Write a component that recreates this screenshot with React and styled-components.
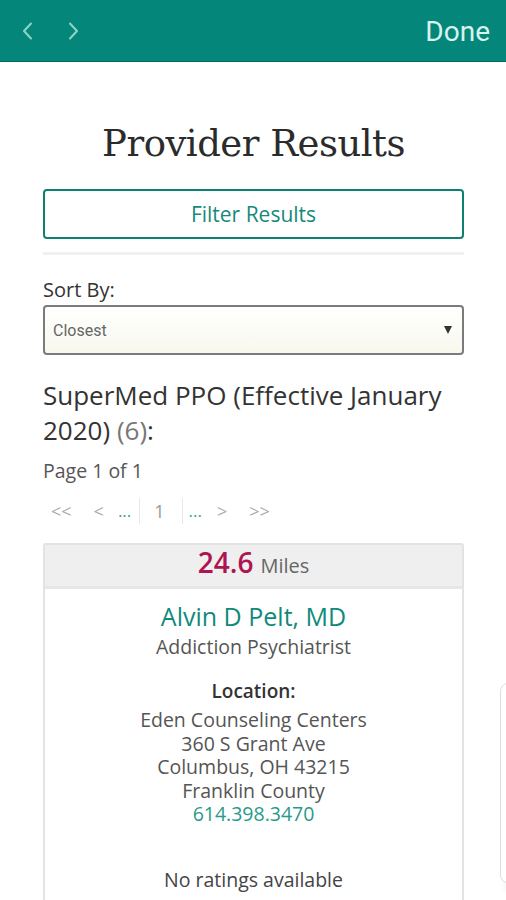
import styled, { createGlobalStyle } from "styled-components";

const GlobalStyle = createGlobalStyle`
  body {
    margin: 0;
    background: #ffffff;
    font-family: "Open Sans", "Liberation Sans", sans-serif;
    color: #333333;
  }
`;

const Screen = styled.div`
  position: relative;
  width: 506px;
  height: 900px;
  overflow: hidden;
  background: #ffffff;
`;

const TopBar = styled.header`
  height: 61px;
  background: #04877a;
  border-bottom: 1px solid #026a60;
  display: flex;
  align-items: center;
  padding: 0 16px 0 22px;
`;

const NavArrows = styled.div`
  display: flex;
  align-items: center;
  gap: 33px;
  flex: 1;
`;

const Done = styled.span`
  font-family: Roboto, "Liberation Sans", sans-serif;
  font-size: 28px;
  color: #d8f2ed;
  padding-top: 2px;
`;

const Content = styled.main`
  padding: 0 42px 0 43px;
`;

const Title = styled.h1`
  margin: 60px 0 0;
  font-family: "DejaVu Serif", "Liberation Serif", serif;
  font-weight: normal;
  font-size: 37px;
  line-height: 44px;
  letter-spacing: -0.5px;
  text-align: center;
  color: #2b2b2b;
`;

const FilterButton = styled.button`
  display: block;
  width: 100%;
  height: 50px;
  margin-top: 23px;
  border: 2px solid #0f7f72;
  border-radius: 4px;
  background: #ffffff;
  color: #17897b;
  font-family: "Open Sans", sans-serif;
  font-size: 21px;
`;

const Divider = styled.hr`
  margin: 13px 0 0;
  border: none;
  height: 3px;
  background: #f1f1f1;
`;

const Label = styled.div`
  margin-top: 23px;
  font-size: 20px;
  line-height: 24px;
  color: #333;
`;

const Select = styled.div`
  box-sizing: border-box;
  height: 50px;
  margin-top: 3px;
  border: 2px solid #7b7b7b;
  border-radius: 4px;
  background: linear-gradient(#ffffff, #f8f8ee);
  display: flex;
  align-items: center;
  justify-content: space-between;
  padding: 0 8px 0 8px;
  font-family: Roboto, "Liberation Sans", sans-serif;
  font-size: 16px;
  color: #666;
`;

const Caret = styled.span`
  width: 0;
  height: 0;
  border-left: 4px solid transparent;
  border-right: 4px solid transparent;
  border-top: 8px solid #333;
  margin-right: 2px;
`;

const PlanHeading = styled.h2`
  margin: 23px 0 0;
  font-weight: normal;
  font-size: 26px;
  line-height: 35px;
  color: #333;
`;

const Count = styled.span`
  color: #777;
`;

const PageInfo = styled.div`
  margin-top: 10px;
  font-size: 19.5px;
  line-height: 26px;
  color: #555;
`;

const Pager = styled.nav`
  display: flex;
  align-items: stretch;
  height: 26px;
  margin-top: 14px;
  padding-left: 8px;
  font-size: 18px;
  line-height: 26px;
  color: #aaa;
`;

const PageLink = styled.span`
  margin-left: ${(p) => p.$before || 0}px;
  margin-right: ${(p) => p.$after || 0}px;
`;

const Ellipsis = styled.span`
  color: #3aa394;
  font-size: 17px;
  margin-left: ${(p) => p.$before || 0}px;
  margin-right: ${(p) => p.$after || 0}px;
`;

const CurrentPage = styled.span`
  border-left: 1px solid #e8e8e8;
  border-right: 1px solid #e8e8e8;
  padding: 0 17px 0 14px;
  color: #999;
`;

const Card = styled.section`
  margin-top: 19px;
  border: 2px solid #e3e3e3;
  border-radius: 3px;
  padding-bottom: 40px;
`;

const CardHeader = styled.div`
  display: flex;
  justify-content: center;
  align-items: baseline;
  gap: 7px;
  height: 41px;
  line-height: 34px;
  background: #efefef;
  border-bottom: 3px solid #e6e6e6;
`;

const Distance = styled.span`
  font-size: 28px;
  font-weight: 600;
  color: #ad1450;
`;

const Unit = styled.span`
  font-size: 20px;
  color: #666;
`;

const CardBody = styled.div`
  padding-top: 12px;
  text-align: center;
`;

const Name = styled.div`
  font-size: 25px;
  line-height: 30px;
  color: #0f8a7b;
`;

const Specialty = styled.div`
  margin-top: 3px;
  font-size: 19.5px;
  line-height: 26px;
  color: #555;
`;

const LocationLabel = styled.div`
  margin-top: 18px;
  font-size: 19px;
  line-height: 26px;
  font-weight: 600;
  color: #333;
`;

const Address = styled.div`
  margin-top: 4px;
  font-size: 19.5px;
  line-height: 23.5px;
  color: #555;
`;

const Phone = styled.div`
  color: #2a9a8b;
`;

const Ratings = styled.div`
  margin-top: 41px;
  font-size: 19.5px;
  line-height: 26px;
  color: #444;
`;

const SidePanel = styled.div`
  position: absolute;
  left: 500px;
  top: 683px;
  width: 40px;
  height: 198px;
  border: 1px solid #dedede;
  border-radius: 8px;
  background: #ffffff;
  box-shadow: 0 14px 8px -6px rgba(0, 0, 0, 0.08);
`;

const Chevron = ({ dir }) => (
  <svg width="12" height="18" viewBox="0 0 12 18">
    <polyline
      points={dir === "left" ? "9,1.5 2,9 9,16.5" : "3,1.5 10,9 3,16.5"}
      fill="none"
      stroke="#8fd3c8"
      strokeWidth="2"
      strokeLinecap="round"
      strokeLinejoin="round"
    />
  </svg>
);

const App = () => {
  return (
    <Screen>
      <GlobalStyle />
      <TopBar>
        <NavArrows>
          <Chevron dir="left" />
          <Chevron dir="right" />
        </NavArrows>
        <Done>Done</Done>
      </TopBar>
      <Content>
        <Title>Provider Results</Title>
        <FilterButton>Filter Results</FilterButton>
        <Divider />
        <Label>Sort By:</Label>
        <Select>
          <span>Closest</span>
          <Caret />
        </Select>
        <PlanHeading>
          SuperMed PPO (Effective January 2020) <Count>(6)</Count>:
        </PlanHeading>
        <PageInfo>Page 1 of 1</PageInfo>
        <Pager>
          <PageLink $after={22}>&lt;&lt;</PageLink>
          <PageLink $after={14}>&lt;</PageLink>
          <Ellipsis $after={8}>...</Ellipsis>
          <CurrentPage>1</CurrentPage>
          <Ellipsis $before={6} $after={15}>...</Ellipsis>
          <PageLink $after={22}>&gt;</PageLink>
          <PageLink>&gt;&gt;</PageLink>
        </Pager>
        <Card>
          <CardHeader>
            <Distance>24.6</Distance>
            <Unit>Miles</Unit>
          </CardHeader>
          <CardBody>
            <Name>Alvin D Pelt, MD</Name>
            <Specialty>Addiction Psychiatrist</Specialty>
            <LocationLabel>Location:</LocationLabel>
            <Address>
              Eden Counseling Centers
              <br />
              360 S Grant Ave
              <br />
              Columbus, OH 43215
              <br />
              Franklin County
              <Phone>614.398.3470</Phone>
            </Address>
            <Ratings>No ratings available</Ratings>
          </CardBody>
        </Card>
      </Content>
      <SidePanel />
    </Screen>
  );
};

export default App;
